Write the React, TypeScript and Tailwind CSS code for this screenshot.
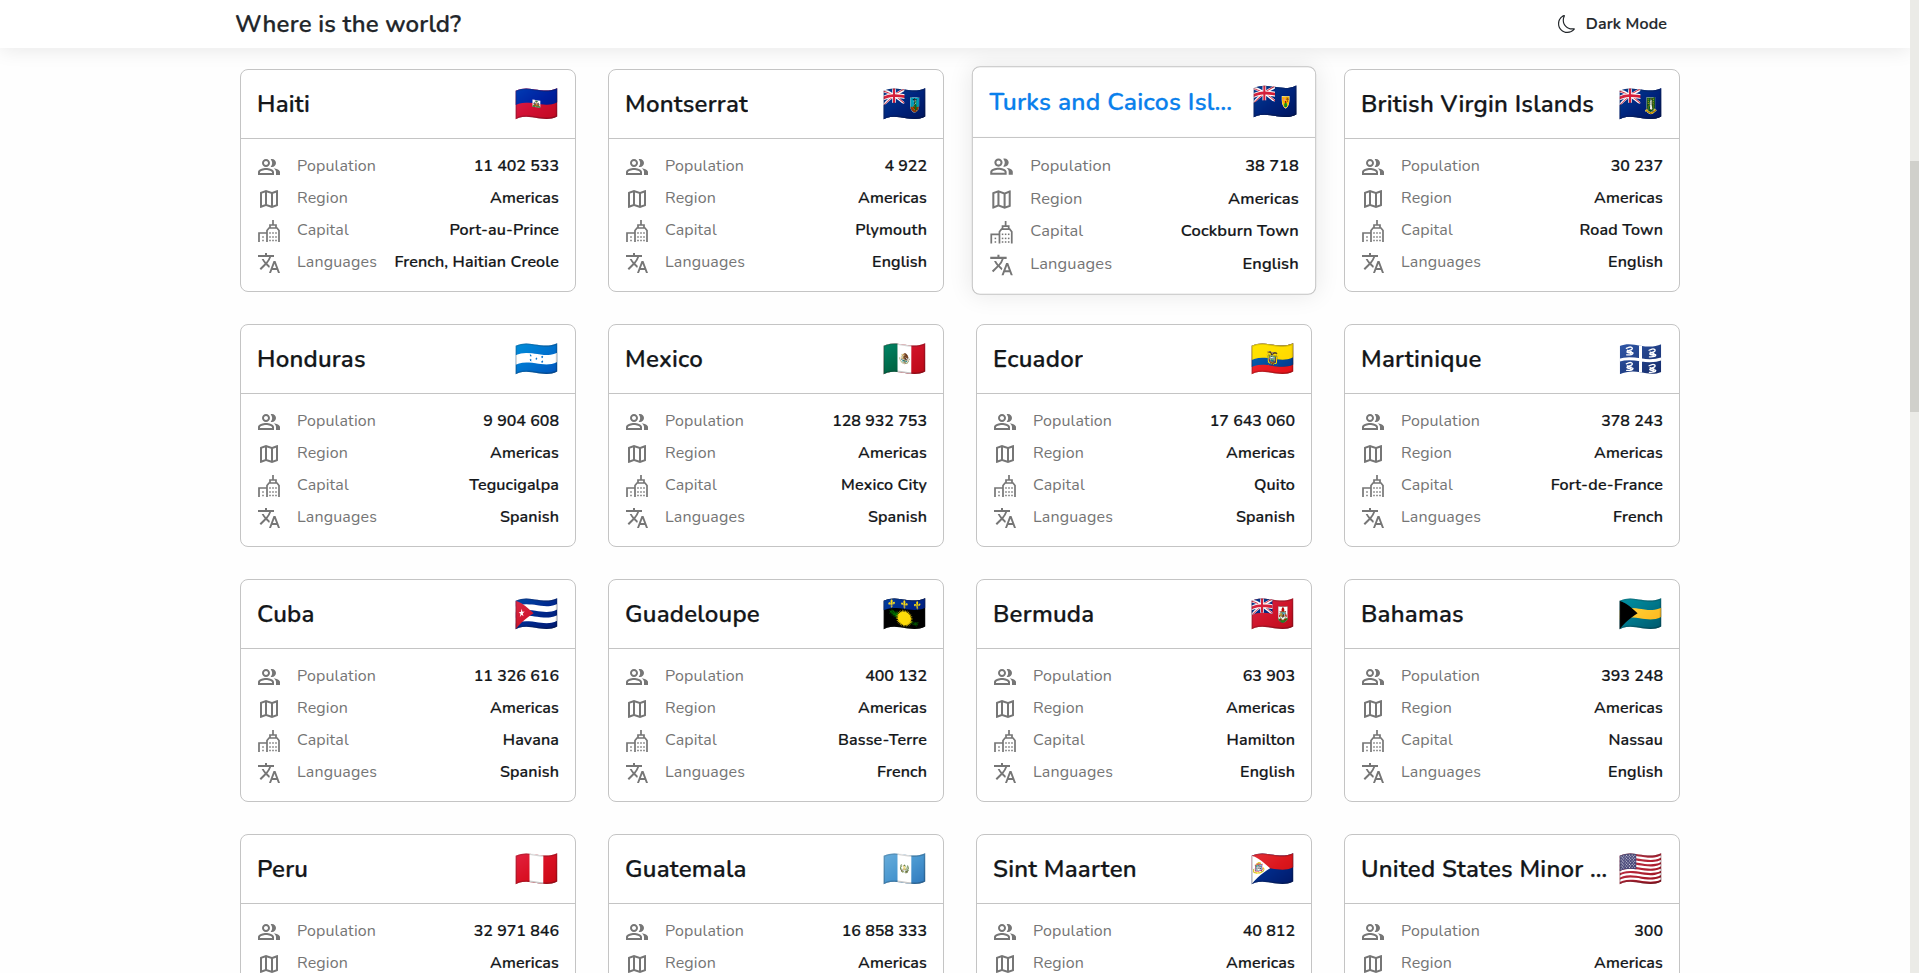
import type { ReactNode } from "react";
import { MdOutlinePeopleAlt, MdOutlineMap, MdTranslate } from "react-icons/md";
import { BsMoon } from "react-icons/bs";

type Country = {
  name: string;
  flag: string;
  population: string;
  capital?: string;
  languages?: string;
  active?: boolean;
};

const countries: Country[] = [
  { name: "Haiti", flag: "🇭🇹", population: "11 402 533", capital: "Port-au-Prince", languages: "French, Haitian Creole" },
  { name: "Montserrat", flag: "🇲🇸", population: "4 922", capital: "Plymouth", languages: "English" },
  { name: "Turks and Caicos Islands", flag: "🇹🇨", population: "38 718", capital: "Cockburn Town", languages: "English", active: true },
  { name: "British Virgin Islands", flag: "🇻🇬", population: "30 237", capital: "Road Town", languages: "English" },
  { name: "Honduras", flag: "🇭🇳", population: "9 904 608", capital: "Tegucigalpa", languages: "Spanish" },
  { name: "Mexico", flag: "🇲🇽", population: "128 932 753", capital: "Mexico City", languages: "Spanish" },
  { name: "Ecuador", flag: "🇪🇨", population: "17 643 060", capital: "Quito", languages: "Spanish" },
  { name: "Martinique", flag: "MQ", population: "378 243", capital: "Fort-de-France", languages: "French" },
  { name: "Cuba", flag: "🇨🇺", population: "11 326 616", capital: "Havana", languages: "Spanish" },
  { name: "Guadeloupe", flag: "🇬🇵", population: "400 132", capital: "Basse-Terre", languages: "French" },
  { name: "Bermuda", flag: "🇧🇲", population: "63 903", capital: "Hamilton", languages: "English" },
  { name: "Bahamas", flag: "🇧🇸", population: "393 248", capital: "Nassau", languages: "English" },
  { name: "Peru", flag: "🇵🇪", population: "32 971 846" },
  { name: "Guatemala", flag: "🇬🇹", population: "16 858 333" },
  { name: "Sint Maarten", flag: "🇸🇽", population: "40 812" },
  { name: "United States Minor Outlying Islands", flag: "🇺🇲", population: "300" },
];

const windows = [
  [6, 18], [6, 21.5],
  [13, 14], [16, 14], [19, 14],
  [13, 18], [16, 18], [19, 18],
  [13, 21.5], [16, 21.5], [19, 21.5],
];

function CityIcon() {
  return (
    <svg viewBox="0 0 24 24" className="size-6" fill="none" stroke="currentColor" strokeWidth="1.7">
      <path d="M16 1v4.5M13 9V6h6v3" />
      <path d="M10 23V11.5L12 9h8l2 2.5V23M2 23v-9h8" />
      {windows.map(([x, y]) => (
        <rect key={`${x}-${y}`} x={x - 0.75} y={y - 0.75} width="1.5" height="1.5" fill="currentColor" stroke="none" />
      ))}
    </svg>
  );
}

const snake = "M-10-8l7-3C5-14 11-9 7-5S-9-1-8 4 8 2 10 6 2 13-9 12M-7-2L5 2M-4 4l9 5";

function MartiniqueFlag() {
  return (
    <svg viewBox="0 0 128 94" className="h-[31px] w-[43px]">
      <defs>
        <linearGradient id="mq" x1="0" y1="0" x2="1" y2="1">
          <stop offset="0" stopColor="#2f57a8" />
          <stop offset="1" stopColor="#142a68" />
        </linearGradient>
        <clipPath id="mq-clip">
          <path d="M1 6C22-3 42 1 64 5s42 5 63-4v84c-21 9-41 5-63 1S22 83 1 92z" />
        </clipPath>
      </defs>
      <g clipPath="url(#mq-clip)">
        <path d="M0 0h128v94H0z" fill="url(#mq)" />
        <path d="M0 49c22-8 42-5 64-1s42 5 64-3M64 0v94" fill="none" stroke="#fff" strokeWidth="9" />
        <g fill="none" stroke="#fff" strokeWidth="4" strokeLinecap="round">
          <path transform="translate(31 21)" d={snake} />
          <path transform="translate(100 27)" d={snake} />
          <path transform="translate(31 68)" d={snake} />
          <path transform="translate(100 74)" d={snake} />
        </g>
      </g>
    </svg>
  );
}

function Row({ icon, label, value, numeric }: { icon: ReactNode; label: string; value?: string; numeric?: boolean }) {
  return (
    <div className="flex h-8 items-center">
      <span className="text-2xl text-[#767676]">{icon}</span>
      <span className="-mt-0.5 ml-4 tracking-[0.009em] text-[#757575]">{label}</span>
      <span
        className={
          numeric
            ? "-mt-0.5 ml-auto font-semibold whitespace-nowrap text-[#14171a] [-webkit-text-stroke:0.2px]"
            : "-mt-0.5 ml-auto font-semibold tracking-[0.009em] whitespace-nowrap text-[#14171a] [-webkit-text-stroke:0.2px]"
        }
      >
        {value}
      </span>
    </div>
  );
}

function Card({ c }: { c: Country }) {
  return (
    <article
      className={
        c.active
          ? "h-[223px] scale-[1.025] rounded-lg border border-[#c4c4c4] bg-white shadow-[0_0_24px_rgba(0,0,0,0.09)]"
          : "h-[223px] rounded-lg border border-[#c4c4c4] bg-white"
      }
    >
      <div className="flex h-[69px] items-center justify-between border-b border-[#c4c4c4] px-4">
        <h2
          className={
            c.active
              ? "max-w-[250px] truncate text-2xl font-semibold tracking-[0.0095em] text-[#0a80ec] [-webkit-text-stroke:0.25px]"
              : "max-w-[250px] truncate text-2xl font-semibold tracking-[0.0095em] text-[#14171a] [-webkit-text-stroke:0.25px]"
          }
        >
          {c.name}
        </h2>
        {c.flag === "MQ" ? (
          <span className="mr-px"><MartiniqueFlag /></span>
        ) : (
          <span className="mt-0.5 w-[45px] text-[36px] leading-none whitespace-nowrap">{c.flag}</span>
        )}
      </div>
      <div className="px-4 py-3">
        <Row icon={<MdOutlinePeopleAlt />} label="Population" value={c.population} numeric />
        <Row icon={<MdOutlineMap />} label="Region" value="Americas" />
        <Row icon={<CityIcon />} label="Capital" value={c.capital} />
        <Row icon={<MdTranslate />} label="Languages" value={c.languages} />
      </div>
    </article>
  );
}

export default function App() {
  return (
    <div className="flex h-[973px] overflow-hidden bg-[#fefefe] font-['Nunito','Noto_Color_Emoji',sans-serif] text-base">
      <div className="flex w-[1910px] shrink-0 flex-col">
        <header className="z-10 flex h-12 shrink-0 items-center justify-between bg-white pr-[243px] pl-[235px] text-[#22262a] shadow-[0_2px_20px_rgba(0,0,0,0.09)]">
          <h1 className="text-2xl font-semibold tracking-[0.0075em] [-webkit-text-stroke:0.25px]">Where is the world?</h1>
          <button className="flex items-center gap-2.5 font-semibold tracking-[0.009em] [-webkit-text-stroke:0.2px]">
            <BsMoon className="size-[18px]" />
            Dark Mode
          </button>
        </header>
        <main className="grid grid-cols-[repeat(4,336px)] gap-8 pt-[21px] pl-60">
          {countries.map((c) => (
            <Card key={c.name} c={c} />
          ))}
        </main>
      </div>
      <div className="z-20 flex-1 bg-[#ebebe7] pt-[161px]">
        <div className="h-[251px] bg-[#d0d0cb]" />
      </div>
    </div>
  );
}
